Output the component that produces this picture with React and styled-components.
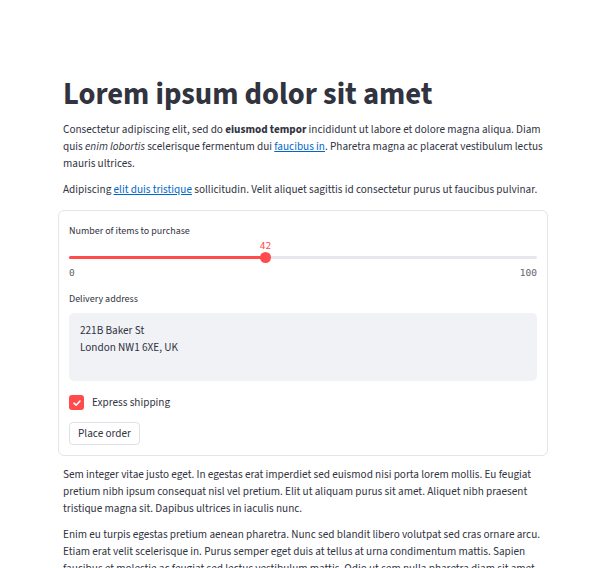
import React from "react";
import styled, { createGlobalStyle } from "styled-components";

const Global = createGlobalStyle`
  html, body { margin: 0; padding: 0; background: #ffffff; }
  body {
    font-family: "Source Sans 3", "Lato", sans-serif;
    color: #31333f;
    -webkit-font-smoothing: antialiased;
  }
`;

const Page = styled.main`
  width: 490px;
  margin: 0 auto;
  padding: 73px 0 0 6px;
  display: flex;
  flex-direction: column;
`;

const Title = styled.h1`
  margin: 0 0 4px;
  padding: 0 5px;
  font-weight: 700;
  font-size: 30.6px;
  line-height: 44px;
  color: #31333f;
`;

const Para = styled.p`
  margin: 0 0 9px;
  padding: 0 5px;
  font-size: 11.2px;
  line-height: 17px;
  color: #31333f;
`;

const Link = styled.a`
  color: #0068c9;
  text-decoration: underline;
`;

const Card = styled.section`
  margin: 3px 0 10px;
  border: 1px solid #e4e5e9;
  border-radius: 6px;
  padding: 13px 10px 10px;
  display: flex;
  flex-direction: column;
`;

const Label = styled.div`
  font-size: 10px;
  line-height: 14px;
  color: #31333f;
  margin-bottom: 2px;
`;

const SliderWrap = styled.div`
  position: relative;
  height: 46px;
  margin-bottom: 6px;
`;

const Track = styled.div`
  position: absolute;
  left: 0;
  right: 0;
  top: 16px;
  height: 3px;
  border-radius: 2px;
  background: #e6e8ee;
`;

const Fill = styled.div`
  position: absolute;
  left: 0;
  top: 0;
  bottom: 0;
  background: #ff4b4b;
  border-radius: 2px;
`;

const Thumb = styled.div`
  position: absolute;
  top: 12px;
  width: 11px;
  height: 11px;
  margin-left: -5.5px;
  border-radius: 50%;
  background: #ff4b4b;
`;

const ThumbValue = styled.div`
  position: absolute;
  top: 0;
  transform: translateX(-50%);
  font-family: "DejaVu Sans Mono", monospace;
  font-size: 9.5px;
  line-height: 12px;
  color: #ff4b4b;
`;

const Ticks = styled.div`
  position: absolute;
  left: 0;
  right: 0;
  top: 27px;
  display: flex;
  justify-content: space-between;
  font-family: "DejaVu Sans Mono", monospace;
  font-size: 9.5px;
  line-height: 12px;
  color: #62646e;
`;

const TextArea = styled.div`
  background: #f0f2f6;
  border-radius: 5px;
  height: 68px;
  box-sizing: border-box;
  padding: 9px 11px;
  margin: 5px 0 13px;
  font-size: 11.2px;
  line-height: 17px;
  color: #31333f;
`;

const CheckRow = styled.label`
  display: flex;
  align-items: center;
  gap: 8px;
  font-size: 11.2px;
  line-height: 17px;
  margin-bottom: 11px;
`;

const Box = styled.span`
  width: 15px;
  height: 15px;
  border-radius: 3px;
  background: #ff4b4b;
  display: flex;
  align-items: center;
  justify-content: center;
`;

const Button = styled.button`
  align-self: flex-start;
  font-family: inherit;
  font-size: 11.2px;
  line-height: 17px;
  color: #31333f;
  background: #ffffff;
  border: 1px solid #dfe0e4;
  border-radius: 4px;
  padding: 2px 8px;
`;

export default function App() {
  const value = 42;
  return (
    <>
      <Global />
      <Page>
        <Title>Lorem ipsum dolor sit amet</Title>
        <Para>
          Consectetur adipiscing elit, sed do <b>eiusmod tempor</b> incididunt ut labore et dolore magna aliqua. Diam
          quis <i>enim lobortis</i> scelerisque fermentum dui <Link href="#">faucibus in</Link>. Pharetra magna ac placerat
          vestibulum lectus mauris ultrices.
        </Para>
        <Para>
          Adipiscing <Link href="#">elit duis tristique</Link> sollicitudin. Velit aliquet sagittis id consectetur purus
          ut faucibus pulvinar.
        </Para>
        <Card>
          <Label>Number of items to purchase</Label>
          <SliderWrap>
            <ThumbValue style={{ left: `${value}%` }}>{value}</ThumbValue>
            <Track>
              <Fill style={{ width: `${value}%` }} />
            </Track>
            <Thumb style={{ left: `${value}%` }} />
            <Ticks>
              <span>0</span>
              <span>100</span>
            </Ticks>
          </SliderWrap>
          <Label>Delivery address</Label>
          <TextArea>
            221B Baker St
            <br />
            London NW1 6XE, UK
          </TextArea>
          <CheckRow>
            <Box>
              <svg width="10" height="10" viewBox="0 0 10 10">
                <path d="M2 5.2 L4.1 7.2 L8 3" fill="none" stroke="#fff" strokeWidth="1.6" strokeLinecap="round" strokeLinejoin="round" />
              </svg>
            </Box>
            Express shipping
          </CheckRow>
          <Button>Place order</Button>
        </Card>
        <Para>
          Sem integer vitae justo eget. In egestas erat imperdiet sed euismod nisi porta lorem mollis. Eu feugiat
          pretium nibh ipsum consequat nisl vel pretium. Elit ut aliquam purus sit amet. Aliquet nibh praesent
          tristique magna sit. Dapibus ultrices in iaculis nunc.
        </Para>
        <Para>
          Enim eu turpis egestas pretium aenean pharetra. Nunc sed blandit libero volutpat sed cras ornare arcu.
          Etiam erat velit scelerisque in. Purus semper eget duis at tellus at urna condimentum mattis. Sapien
          faucibus et molestie ac feugiat sed lectus vestibulum mattis. Odio ut sem nulla pharetra diam sit amet.
        </Para>
      </Page>
    </>
  );
}
